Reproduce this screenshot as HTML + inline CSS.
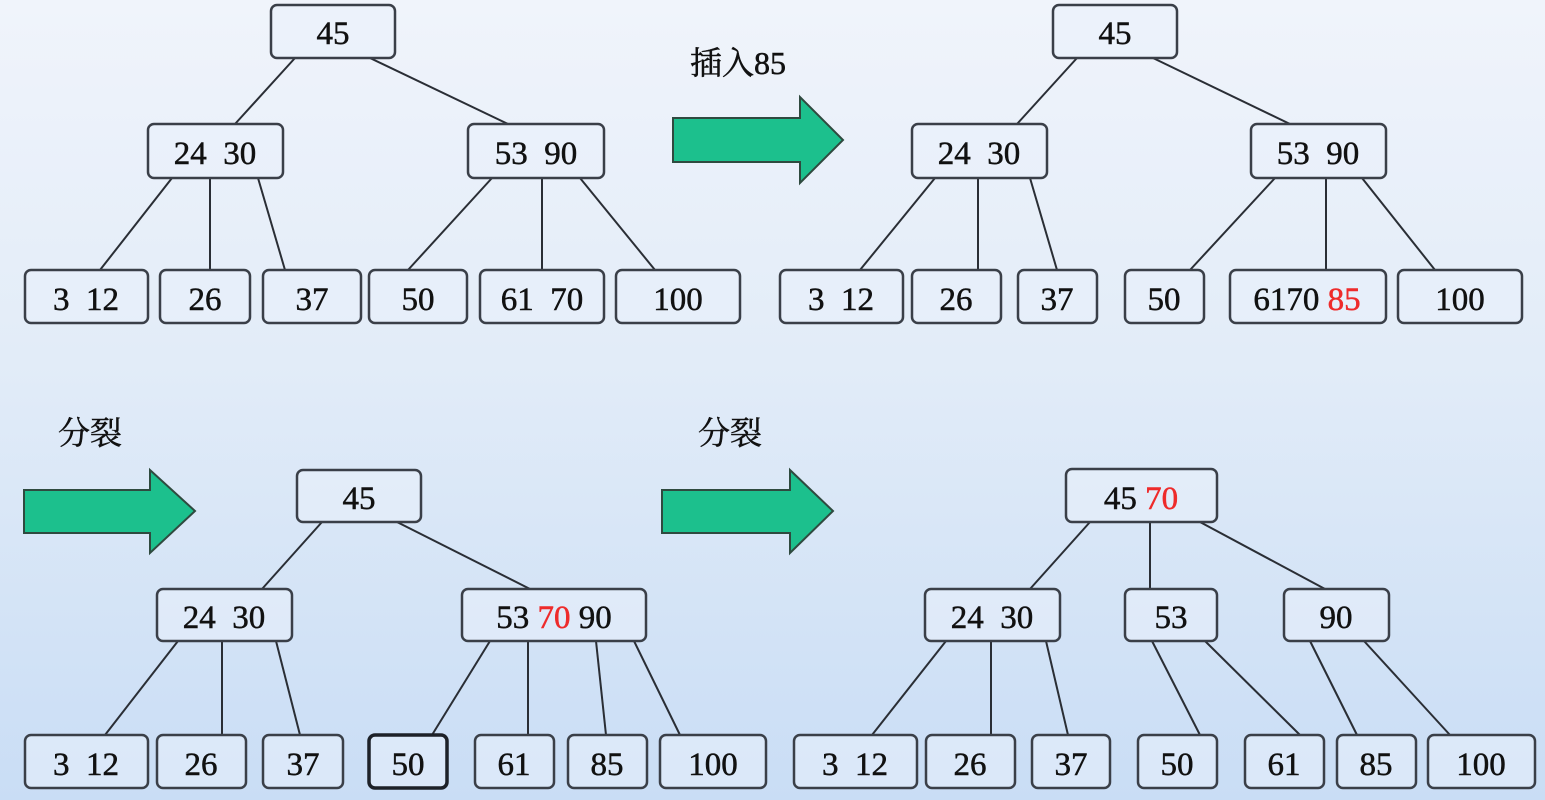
<!DOCTYPE html>
<html><head><meta charset="utf-8"><style>
html,body{margin:0;padding:0;width:1545px;height:800px;overflow:hidden}
body{background:linear-gradient(180deg,#f0f4fb 0%,#e2ecf8 45%,#c9ddf5 100%)}
svg{display:block}
text{font-family:"Liberation Serif","DejaVu Serif","Noto Serif CJK SC",serif;font-size:33px;font-weight:normal;fill:#111;stroke:#111;stroke-width:0.5;text-anchor:middle}
.r{fill:#ee2b2b;stroke:#ee2b2b}
rect{fill:#eaf1fb;fill-opacity:.55;stroke:#3a3f48;stroke-width:2.5}
line{stroke:#2a2e35;stroke-width:2}
.ar{fill:#1cc08d;stroke:#2f4a3f;stroke-width:2}
.lbl{text-anchor:start;font-size:32px;font-family:"Liberation Serif","DejaVu Serif","Noto Serif CJK SC",serif}
</style></head><body>
<svg width="1545" height="800" viewBox="0 0 1545 800">
<g>
<line x1="295" y1="58" x2="235" y2="124"/><line x1="370" y1="58" x2="508" y2="124"/>
<line x1="172" y1="178" x2="100" y2="270"/><line x1="210" y1="178" x2="210" y2="270"/><line x1="258" y1="178" x2="285" y2="270"/>
<line x1="492" y1="178" x2="408" y2="270"/><line x1="542" y1="178" x2="542" y2="270"/><line x1="580" y1="178" x2="655" y2="270"/>
<rect x="271" y="5" width="124" height="53" rx="6"/><text x="333" y="44">45</text>
<rect x="148" y="124" width="135" height="54" rx="6"/><text x="215" y="164" xml:space="preserve">24  30</text>
<rect x="468" y="124" width="136" height="54" rx="6"/><text x="536" y="164" xml:space="preserve">53  90</text>
<rect x="25" y="270" width="123" height="53" rx="6"/><text x="86" y="310" xml:space="preserve">3  12</text>
<rect x="160" y="270" width="90" height="53" rx="6"/><text x="205" y="310">26</text>
<rect x="263" y="270" width="98" height="53" rx="6"/><text x="312" y="310">37</text>
<rect x="369" y="270" width="98" height="53" rx="6"/><text x="418" y="310">50</text>
<rect x="480" y="270" width="124" height="53" rx="6"/><text x="542" y="310" xml:space="preserve">61  70</text>
<rect x="616" y="270" width="124" height="53" rx="6"/><text x="678" y="310">100</text>
</g>
<text class="lbl" x="690" y="74">插入85</text>
<polygon class="ar" points="673,118 800,118 800,97 843,140 800,183 800,162 673,162"/>
<g>
<line x1="1077" y1="58" x2="1017" y2="124"/><line x1="1153" y1="58" x2="1290" y2="124"/>
<line x1="935" y1="178" x2="860" y2="270"/><line x1="978" y1="178" x2="978" y2="270"/><line x1="1030" y1="178" x2="1057" y2="270"/>
<line x1="1275" y1="178" x2="1190" y2="270"/><line x1="1326" y1="178" x2="1326" y2="270"/><line x1="1362" y1="178" x2="1435" y2="270"/>
<rect x="1053" y="5" width="124" height="53" rx="6"/><text x="1115" y="44">45</text>
<rect x="912" y="124" width="135" height="54" rx="6"/><text x="979" y="164" xml:space="preserve">24  30</text>
<rect x="1251" y="124" width="135" height="54" rx="6"/><text x="1318" y="164" xml:space="preserve">53  90</text>
<rect x="780" y="270" width="123" height="53" rx="6"/><text x="841" y="310" xml:space="preserve">3  12</text>
<rect x="912" y="270" width="89" height="53" rx="6"/><text x="956" y="310">26</text>
<rect x="1018" y="270" width="79" height="53" rx="6"/><text x="1057" y="310">37</text>
<rect x="1125" y="270" width="79" height="53" rx="6"/><text x="1164" y="310">50</text>
<rect x="1230" y="270" width="156" height="53" rx="6"/><text x="1307" y="310">6170 <tspan class="r">85</tspan></text>
<rect x="1398" y="270" width="124" height="53" rx="6"/><text x="1460" y="310">100</text>
</g>
<text class="lbl" x="58" y="444">分裂</text>
<polygon class="ar" points="24,490 150,490 150,470 195,511 150,553 150,533 24,533"/>
<g>
<line x1="322" y1="522" x2="262" y2="589"/><line x1="397" y1="522" x2="530" y2="589"/>
<line x1="178" y1="641" x2="105" y2="735"/><line x1="222" y1="641" x2="222" y2="735"/><line x1="276" y1="641" x2="300" y2="735"/>
<line x1="490" y1="641" x2="432" y2="735"/><line x1="528" y1="641" x2="528" y2="735"/><line x1="596" y1="641" x2="606" y2="735"/><line x1="634" y1="641" x2="680" y2="735"/>
<rect x="297" y="470" width="124" height="52" rx="6"/><text x="359" y="509">45</text>
<rect x="157" y="589" width="135" height="52" rx="6"/><text x="224" y="628" xml:space="preserve">24  30</text>
<rect x="462" y="589" width="184" height="52" rx="6"/><text x="554" y="628">53 <tspan class="r">70</tspan> 90</text>
<rect x="25" y="735" width="123" height="53" rx="6"/><text x="86" y="775" xml:space="preserve">3  12</text>
<rect x="157" y="735" width="89" height="53" rx="6"/><text x="201" y="775">26</text>
<rect x="263" y="735" width="80" height="53" rx="6"/><text x="303" y="775">37</text>
<rect x="369" y="735" width="78" height="53" rx="6" style="stroke-width:3.5;stroke:#1d2128"/><text x="408" y="775">50</text>
<rect x="475" y="735" width="79" height="53" rx="6"/><text x="514" y="775">61</text>
<rect x="568" y="735" width="79" height="53" rx="6"/><text x="607" y="775">85</text>
<rect x="660" y="735" width="106" height="53" rx="6"/><text x="713" y="775">100</text>
</g>
<text class="lbl" x="698" y="444">分裂</text>
<polygon class="ar" points="662,490 790,490 790,470 833,511 790,553 790,533 662,533"/>
<g>
<line x1="1090" y1="522" x2="1030" y2="589"/><line x1="1150" y1="522" x2="1150" y2="589"/><line x1="1200" y1="522" x2="1325" y2="589"/>
<line x1="946" y1="641" x2="872" y2="735"/><line x1="991" y1="641" x2="991" y2="735"/><line x1="1046" y1="641" x2="1068" y2="735"/>
<line x1="1152" y1="641" x2="1200" y2="735"/><line x1="1205" y1="641" x2="1300" y2="735"/>
<line x1="1310" y1="641" x2="1357" y2="735"/><line x1="1364" y1="641" x2="1450" y2="735"/>
<rect x="1066" y="469" width="151" height="53" rx="6"/><text x="1141" y="509">45 <tspan class="r">70</tspan></text>
<rect x="925" y="589" width="135" height="52" rx="6"/><text x="992" y="628" xml:space="preserve">24  30</text>
<rect x="1125" y="589" width="92" height="52" rx="6"/><text x="1171" y="628">53</text>
<rect x="1284" y="589" width="105" height="52" rx="6"/><text x="1336" y="628">90</text>
<rect x="794" y="735" width="123" height="53" rx="6"/><text x="855" y="775" xml:space="preserve">3  12</text>
<rect x="926" y="735" width="89" height="53" rx="6"/><text x="970" y="775">26</text>
<rect x="1032" y="735" width="78" height="53" rx="6"/><text x="1071" y="775">37</text>
<rect x="1138" y="735" width="79" height="53" rx="6"/><text x="1177" y="775">50</text>
<rect x="1245" y="735" width="79" height="53" rx="6"/><text x="1284" y="775">61</text>
<rect x="1337" y="735" width="79" height="53" rx="6"/><text x="1376" y="775">85</text>
<rect x="1428" y="735" width="107" height="53" rx="6"/><text x="1481" y="775">100</text>
</g>
</svg>
</body></html>
